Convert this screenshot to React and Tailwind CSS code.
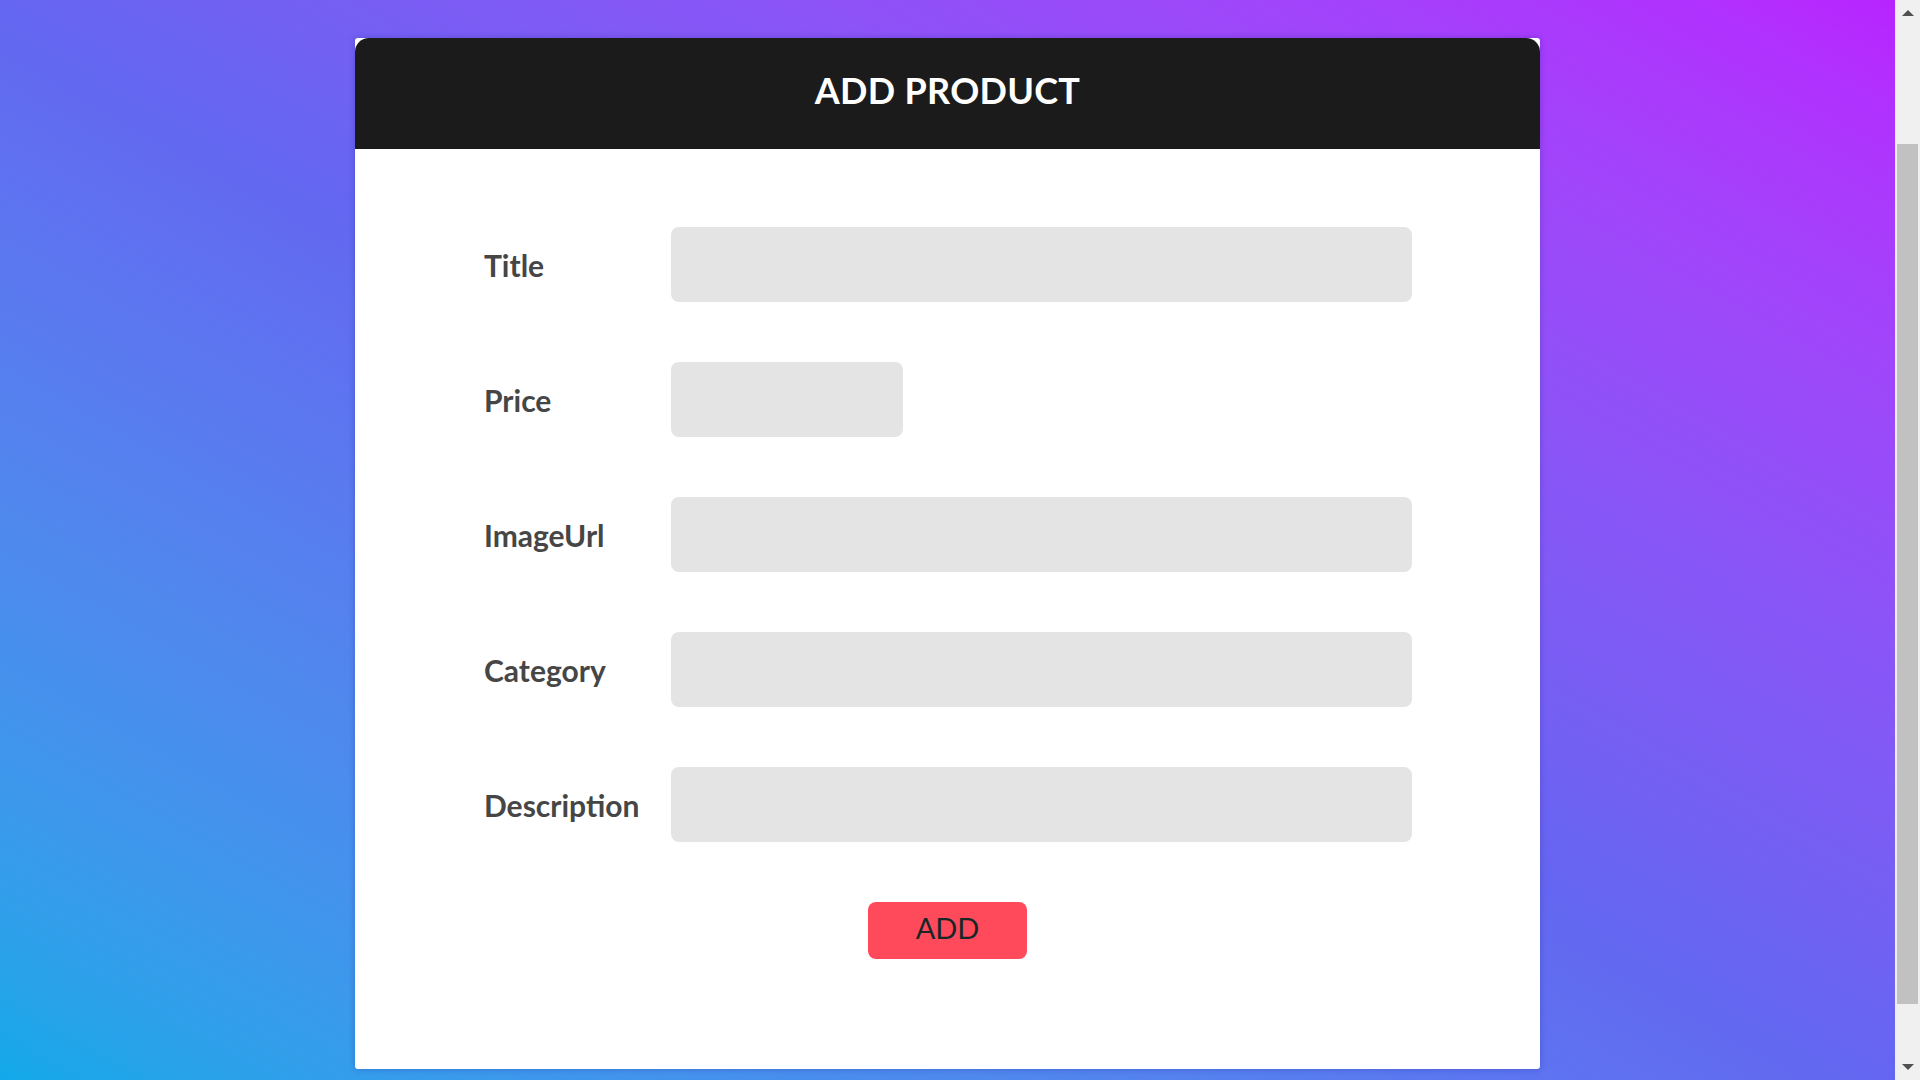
import React from "react";

const fields = [
  { label: "Title", w: "w-[741px]" },
  { label: "Price", w: "w-[232px]" },
  { label: "ImageUrl", w: "w-[741px]" },
  { label: "Category", w: "w-[741px]" },
  { label: "Description", w: "w-[741px]" },
];

export default function App() {
  return (
    <div className="flex h-screen w-full overflow-hidden" style={{ fontFamily: "Lato, 'Open Sans', sans-serif" }}>
      <div className="flex-1 bg-linear-to-tr from-[#10a9e9] via-[#6466f1] to-[#b823ff] flex justify-center">
        <div className="mt-[38px] w-[1185px] h-[1031px] bg-white rounded-[3px] shadow-[0_0_6px_rgba(40,40,160,0.35)] flex flex-col">
          <div className="h-[111px] bg-[#1b1b1b] rounded-t-[14px] flex items-center justify-center">
            <h1 className="text-white text-[36px] font-bold tracking-[0.3px] leading-none mt-[-7px]">ADD PRODUCT</h1>
          </div>
          <div className="flex flex-col pt-[78px] pl-[129px] gap-[60px]">
            {fields.map((f) => (
              <div key={f.label} className="flex items-center">
                <label className="w-[187px] text-[30px] font-bold text-[#464646] leading-none">{f.label}</label>
                <div className={`${f.w} h-[75px] rounded-[8px] bg-[#e4e4e4]`}></div>
              </div>
            ))}
          </div>
          <div className="flex justify-center mt-[60px]">
            <button className="w-[159px] h-[57px] rounded-[8px] bg-[#ff4a5c] text-[29px] text-[#172626] leading-none pb-[6px]">ADD</button>
          </div>
        </div>
      </div>
      <div className="w-[25px] h-full bg-[#f0f0f0] flex flex-col items-center">
        <div className="h-[22px] flex items-center justify-center">
          <div className="w-0 h-0 border-l-[6px] border-r-[6px] border-b-[6px] border-l-transparent border-r-transparent border-b-[#505050] mt-[4px]"></div>
        </div>
        <div className="mt-[122px] w-[21px] h-[860px] bg-[#c1c1c1]"></div>
        <div className="flex-1"></div>
        <div className="h-[22px] flex items-center justify-center">
          <div className="w-0 h-0 border-l-[6px] border-r-[6px] border-t-[6px] border-l-transparent border-r-transparent border-t-[#505050] mb-[4px]"></div>
        </div>
      </div>
    </div>
  );
}
